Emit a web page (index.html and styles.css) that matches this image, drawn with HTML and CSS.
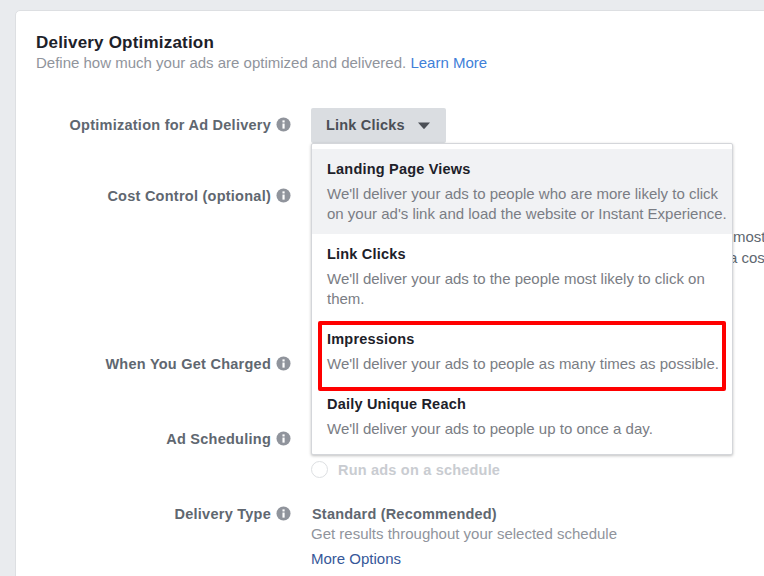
FILE: index.html
```html
<!DOCTYPE html>
<html lang="en">
<head>
<meta charset="utf-8">
<title>Delivery Optimization</title>
<link rel="stylesheet" href="styles.css">
</head>
<body>
<main class="card">
  <header class="head">
    <h1 class="title">Delivery Optimization</h1>
    <p class="sub">Define how much your ads are optimized and delivered. <a class="learn" href="#">Learn More</a></p>
  </header>

  <div class="row row-opt">
    <div class="label"><span>Optimization for Ad Delivery</span><svg class="info" viewBox="0 0 16 16"><circle cx="8" cy="8" r="7.5" fill="#90949c"/><rect x="6.9" y="7" width="2.3" height="5.4" fill="#fff"/><rect x="6.9" y="3.6" width="2.3" height="2.2" fill="#fff"/></svg></div>
    <div class="value">
      <button class="select">Link Clicks<svg class="caret" viewBox="0 0 12 7"><path d="M0 0.5h12L6.7 6.6a1 1 0 0 1-1.4 0z" fill="#4b4f56"/></svg></button>
    </div>
  </div>

  <div class="row row-cost">
    <div class="label"><span>Cost Control (optional)</span><svg class="info" viewBox="0 0 16 16"><circle cx="8" cy="8" r="7.5" fill="#90949c"/><rect x="6.9" y="7" width="2.3" height="5.4" fill="#fff"/><rect x="6.9" y="3.6" width="2.3" height="2.2" fill="#fff"/></svg></div>
    <div class="value behind">
      <p class="behind-line">most</p>
      <p class="behind-line behind-second">a cost</p>
    </div>
  </div>

  <div class="row row-charged">
    <div class="label"><span>When You Get Charged</span><svg class="info" viewBox="0 0 16 16"><circle cx="8" cy="8" r="7.5" fill="#90949c"/><rect x="6.9" y="7" width="2.3" height="5.4" fill="#fff"/><rect x="6.9" y="3.6" width="2.3" height="2.2" fill="#fff"/></svg></div>
  </div>

  <div class="row row-sched">
    <div class="label"><span>Ad Scheduling</span><svg class="info" viewBox="0 0 16 16"><circle cx="8" cy="8" r="7.5" fill="#90949c"/><rect x="6.9" y="7" width="2.3" height="5.4" fill="#fff"/><rect x="6.9" y="3.6" width="2.3" height="2.2" fill="#fff"/></svg></div>
    <div class="value">
      <label class="radio"><span class="dot"></span>Run ads on a schedule</label>
    </div>
  </div>

  <div class="row row-type">
    <div class="label"><span>Delivery Type</span><svg class="info" viewBox="0 0 16 16"><circle cx="8" cy="8" r="7.5" fill="#90949c"/><rect x="6.9" y="7" width="2.3" height="5.4" fill="#fff"/><rect x="6.9" y="3.6" width="2.3" height="2.2" fill="#fff"/></svg></div>
    <div class="value">
      <div class="std">Standard (Recommended)</div>
      <div class="std-sub">Get results throughout your selected schedule</div>
      <a class="more" href="#">More Options</a>
    </div>
  </div>

  <div class="menu">
    <div class="opt opt-hover">
      <div class="opt-title">Landing Page Views</div>
      <div class="opt-desc">We'll deliver your ads to people who are more likely to click<br>on your ad's link and load the website or Instant Experience.</div>
    </div>
    <div class="opt">
      <div class="opt-title">Link Clicks</div>
      <div class="opt-desc">We'll deliver your ads to the people most likely to click on<br>them.</div>
    </div>
    <div class="opt opt-imp">
      <div class="opt-title">Impressions</div>
      <div class="opt-desc">We'll deliver your ads to people as many times as possible.</div>
    </div>
    <div class="opt opt-daily">
      <div class="opt-title">Daily Unique Reach</div>
      <div class="opt-desc">We'll deliver your ads to people up to once a day.</div>
    </div>
    <div class="highlight"></div>
  </div>
</main>
</body>
</html>
```

FILE: styles.css
```css
* { box-sizing: border-box; }
html, body { margin: 0; height: 100%; overflow: hidden; }
body {
  background: #e9ebee;
  font-family: "Liberation Sans", Arial, sans-serif;
  padding: 10px 0 0 15px;
}
.card {
  position: relative;
  width: 800px;
  height: 620px;
  background: #fff;
  border: 1px solid #dddfe2;
  border-radius: 5px;
  padding: 22px 20px 0;
}
.head { height: 75px; }
.title {
  margin: 0;
  font-size: 17px;
  line-height: 20px;
  font-weight: 700;
  color: #1d2129;
  letter-spacing: 0.2px;
}
.sub {
  margin: 0;
  font-size: 15px;
  line-height: 20px;
  color: #90949c;
}
.learn { color: #4080d8; text-decoration: none; }
.row { display: grid; grid-template-columns: 255px 1fr; column-gap: 20px; }
.label {
  display: flex;
  justify-content: flex-end;
  align-items: center;
  gap: 5px;
  height: 34px;
  font-size: 14.5px;
  font-weight: 700;
  color: #606770;
  letter-spacing: 0.25px;
  white-space: nowrap;
}
.info { width: 15px; height: 15px; flex: none; margin-top: -2px; }
.row-opt { height: 71px; }
.row-cost { height: 168px; }
.row-charged { height: 75px; }
.row-sched { height: 81px; }
.select {
  display: flex;
  align-items: center;
  height: 35px;
  width: 135px;
  padding: 0 0 2px 15px;
  border: 0;
  border-radius: 2px;
  background: #dadde1;
  font: 700 14.5px "Liberation Sans", Arial, sans-serif;
  color: #4b4f56;
  letter-spacing: 0.2px;
}
.caret { width: 12px; height: 7px; margin-left: 13px; margin-top: 2px; }
.behind { padding-top: 47px; }
.behind-line {
  margin: 0 0 0 422px;
  font-size: 15px;
  line-height: 21px;
  color: #606770;
  white-space: nowrap;
}
.behind-second { margin-left: 418px; }
.radio {
  display: flex;
  align-items: center;
  gap: 10px;
  margin-top: 39px;
  font-size: 14.5px;
  font-weight: 700;
  color: #c9ccd1;
  letter-spacing: 0.2px;
}
.dot {
  width: 17px;
  height: 17px;
  border: 1px solid #dddfe2;
  border-radius: 50%;
}
.row-type .label { height: 22px; }
.std { font-size: 14.5px; line-height: 22px; font-weight: 700; color: #606770; margin-left: 1px; letter-spacing: 0.2px; }
.std-sub { font-size: 15px; line-height: 21px; color: #90949c; margin-top: -2px; }
.more { display: block; margin-top: 5px; font-size: 15px; line-height: 20px; color: #365899; text-decoration: none; }
.menu {
  position: absolute;
  left: 295px;
  top: 132px;
  width: 422px;
  height: 312px;
  background: #fff;
  border-radius: 2px;
  border: 1px solid #d4d6da;
  box-shadow: 0 1px 3px rgba(0, 0, 0, 0.25);
  padding-top: 5px;
}
.opt { padding: 10px 15px 0; height: 85px; }
.opt-hover { background: #f1f2f4; }
.opt-imp { height: 65px; }
.opt-daily { height: 65px; }
.opt-title {
  font-size: 14.5px;
  line-height: 20px;
  font-weight: 700;
  color: #1d2129;
  letter-spacing: 0.2px;
}
.opt-desc {
  margin-top: 5px;
  font-size: 15px;
  line-height: 20px;
  color: #7a7d84;
  white-space: nowrap;
}
.highlight {
  position: absolute;
  left: 6px;
  top: 177px;
  width: 408px;
  height: 70px;
  border: 4px solid #f00;
  border-radius: 2px;
}
```
